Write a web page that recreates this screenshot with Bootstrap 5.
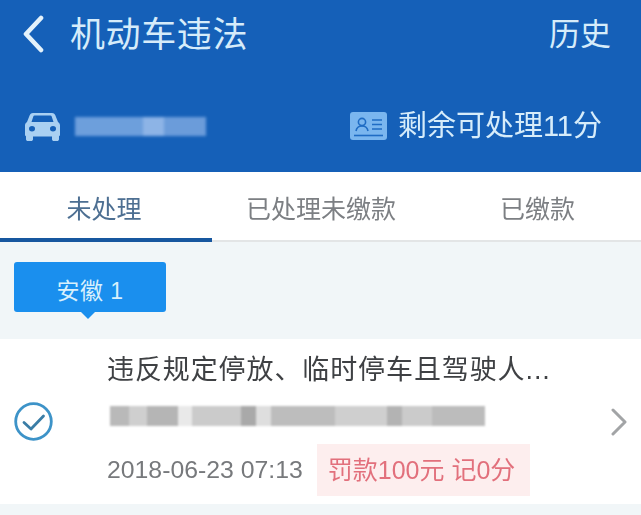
<!DOCTYPE html>
<html lang="zh">
<head>
<meta charset="utf-8">
<title>机动车违法</title>
<link href="https://cdn.jsdelivr.net/npm/bootstrap@5.3.0/dist/css/bootstrap.min.css" rel="stylesheet">
<style>
html, body { margin: 0; height: 515px; overflow: hidden; }
body { width: 641px; background: #f1f6f8; font-family: "Liberation Sans", "Noto Sans CJK SC", sans-serif; }
.soft { filter: blur(.55px); }
.hdr { height: 172px; background: #1560b8; color: #d6ecfa; padding: 0 30px 0 22px; }
.hdr-top { height: 68px; }
.hdr-sub { height: 104px; padding: 12px 9px 0 3px; }
.hdr-title { font-size: 35px; line-height: 1; margin-left: 26px; letter-spacing: .6px; }
.hdr-hist { font-size: 31px; line-height: 1; }
.plate { width: 131px; height: 19px; margin-left: 15px; filter: blur(1.5px);
  background: linear-gradient(90deg, #6d9fdc 0 52%, #8db4e6 52% 68%, #6b9cda 68% 100%); }
.score { font-size: 29px; line-height: 1; margin-left: 11px; }
.tabbar { height: 70px; background: #fff; border-bottom: 2px solid #e3e5e6; }
.tabitem { font-size: 25px; line-height: 1; color: #7c7f83; margin-bottom: -2px; padding-top: 8px; border-bottom: 4px solid transparent; }
.tabitem.sel { color: #4d6f92; border-bottom-color: #17579f; }
.t1 { width: 212px; padding-right: 4px; } .t2 { width: 218px; } .t3 { width: 211px; padding-left: 4px; }
.regionbar { height: 97px; padding: 20px 0 0 14px; }
.regiontag { width: 152px; height: 50px; padding-top: 8px; background: #1a8fee; color: #d8f0fc; border-radius: 3px; font-size: 23px; line-height: 1; letter-spacing: .5px; }
.regiontag::after { content: ""; position: absolute; left: 67px; top: 50px; border: 7px solid transparent; border-top-color: #1a8fee; border-bottom: 0; }
.rowcard { height: 165px; background: #fff; }
.checkcol { width: 107px; padding-left: 14px; }
.rowbody { width: 504px; padding-top: 17px; }
.rowname { font-size: 27px; line-height: 28px; color: #3f4144; letter-spacing: .9px; white-space: nowrap; }
.mosaic { width: 375px; height: 20px; margin: 22px 0 0 3px; filter: blur(1px);
  background: linear-gradient(90deg, #b9b9b9 0 5%, #cfcfcf 5% 10%, #b5b5b5 10% 18%, #e9e9e9 18% 22%, #cbcbcb 22% 35%, #a9a9a9 35% 39%, #dedede 39% 43%, #bdbdbd 43% 60%, #cfcfcf 60% 74%, #b3b3b3 74% 78%, #cbcbcb 78% 86%, #bcbcbc 86% 100%); }
.when { font-size: 24.8px; line-height: 1; color: #77797c; white-space: nowrap; }
.metaline { margin-top: 18px; }
.fine { height: 52px; margin-left: 14px; padding: 0 15px 0 11px; background: #fdeeee; color: #e2707c; font-size: 25px; line-height: 1; white-space: nowrap; }
</style>
</head>
<body>
<div class="soft">
  <header class="hdr d-flex flex-column">
    <div class="hdr-top d-flex align-items-center">
      <svg width="22" height="38" viewBox="0 0 22 38" fill="none" stroke="#e4f2fb" stroke-width="4.6" stroke-linecap="round" stroke-linejoin="round" role="img" aria-label="返回"><path d="M19 3 4 19l15 16"/></svg>
      <div class="hdr-title">机动车违法</div>
      <div class="hdr-hist ms-auto">历史</div>
    </div>
    <div class="hdr-sub d-flex align-items-center">
      <svg width="35" height="29" viewBox="0 0 35 32" preserveAspectRatio="none" role="img" aria-label="车辆"><path fill="#a9d0f2" fill-rule="evenodd" d="M8 1h19c1.500 0 2.600.8 3.200 2.200L33 11c1.300 1 2 2.400 2 4v10c0 .8-.4 1.400-1 1.700V30c0 1-.8 2-2 2h-3c-1.200 0-2-1-2-2v-3H8v3c0 1-.8 2-2 2H3c-1.200 0-2-1-2-2v-3.300c-.6-.3-1-.9-1-1.700V15c0-1.600.7-3 2-4l2.800-7.800C5.400 1.800 6.500 1 8 1Zm.5 3.500L6.500 11h22l-2-6.500c-.2-.5-.5-.7-1-.7h-16c-.5 0-.8.2-1 .7ZM7 15.500a3 3 0 1 0 0 6 3 3 0 0 0 0-6Zm21 0a3 3 0 1 0 0 6 3 3 0 0 0 0-6Z"/></svg>
      <div class="plate"></div>
      <div class="ms-auto d-flex align-items-center">
        <svg width="37" height="28" viewBox="0 0 37 28" role="img" aria-label="驾驶证"><rect width="37" height="28" rx="3" fill="#7ab6ef"/><g fill="none" stroke="#1f6cc4" stroke-width="1.600"><circle cx="12" cy="10" r="3.600"/><path d="M6 19c.6-3.500 3-5 6-5s5.400 1.500 6 5"/><path d="M22 8h10M22 12.500h10M22 17h10"/><path d="M4 23.500h29"/></g></svg>
        <div class="score">剩余可处理11分</div>
      </div>
    </div>
  </header>

  <nav class="tabbar d-flex">
    <div class="tabitem sel t1 d-flex align-items-center justify-content-center">未处理</div>
    <div class="tabitem t2 d-flex align-items-center justify-content-center">已处理未缴款</div>
    <div class="tabitem t3 d-flex align-items-center justify-content-center">已缴款</div>
  </nav>

  <div class="regionbar">
    <div class="regiontag position-relative d-flex align-items-center justify-content-center">安徽 1</div>
  </div>

  <section class="rowcard d-flex">
    <div class="checkcol d-flex align-items-center">
      <svg width="39" height="39" viewBox="0 0 39 39" fill="none" stroke="#3d93c8" role="img" aria-label="已选中"><circle cx="19.500" cy="19.500" r="17.800" stroke-width="2.800"/><path d="M10 20.500l7 6.500 12.500-13" stroke-width="2.800" stroke-linecap="round" stroke-linejoin="round" stroke="#3a7da6"/></svg>
    </div>
    <div class="rowbody">
      <div class="rowname">违反规定停放、临时停车且驾驶人...</div>
      <div class="mosaic"></div>
      <div class="metaline d-flex align-items-center">
        <div class="when">2018-06-23 07:13</div>
        <div class="fine d-flex align-items-center">罚款100元 记0分</div>
      </div>
    </div>
    <div class="flex-grow-1 d-flex align-items-center">
      <svg width="16" height="28" viewBox="0 0 16 28" fill="none" stroke="#a2a4a6" stroke-width="3" stroke-linecap="round" stroke-linejoin="round" role="img" aria-label="详情"><path d="M2 2l12 12L2 26"/></svg>
    </div>
  </section>
</div>
<script src="https://cdn.jsdelivr.net/npm/bootstrap@5.3.0/dist/js/bootstrap.bundle.min.js"></script>
</body>
</html>
